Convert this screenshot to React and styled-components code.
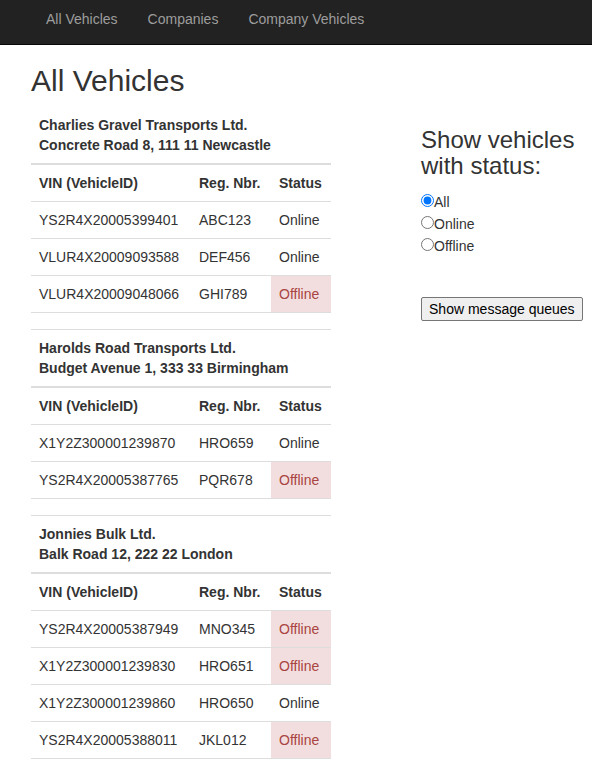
import React, { useState } from 'react';
import styled, { createGlobalStyle } from 'styled-components';

const companies = [
  {
    name: 'Charlies Gravel Transports Ltd.',
    address: 'Concrete Road 8, 111 11 Newcastle',
    vehicles: [
      { vin: 'YS2R4X20005399401', reg: 'ABC123', online: true },
      { vin: 'VLUR4X20009093588', reg: 'DEF456', online: true },
      { vin: 'VLUR4X20009048066', reg: 'GHI789', online: false },
    ],
  },
  {
    name: 'Harolds Road Transports Ltd.',
    address: 'Budget Avenue 1, 333 33 Birmingham',
    vehicles: [
      { vin: 'X1Y2Z300001239870', reg: 'HRO659', online: true },
      { vin: 'YS2R4X20005387765', reg: 'PQR678', online: false },
    ],
  },
  {
    name: 'Jonnies Bulk Ltd.',
    address: 'Balk Road 12, 222 22 London',
    vehicles: [
      { vin: 'YS2R4X20005387949', reg: 'MNO345', online: false },
      { vin: 'X1Y2Z300001239830', reg: 'HRO651', online: false },
      { vin: 'X1Y2Z300001239860', reg: 'HRO650', online: true },
      { vin: 'YS2R4X20005388011', reg: 'JKL012', online: false },
    ],
  },
];

const statuses = ['All', 'Online', 'Offline'];

const App = () => {
  const [status, setStatus] = useState('All');

  const visible = (v) =>
    status === 'All' || (status === 'Online' ? v.online : !v.online);

  return (
    <>
      <GlobalStyle />
      <Navbar>
        <NavList>
          <NavItem href="#">All Vehicles</NavItem>
          <NavItem href="#">Companies</NavItem>
          <NavItem href="#">Company Vehicles</NavItem>
        </NavList>
      </Navbar>

      <Container>
        <Title>All Vehicles</Title>
        <Row>
          <Table>
            <colgroup>
              <Col $w={160} />
              <Col $w={80} />
              <Col $w={60} />
            </colgroup>
            {companies.map((c, i) => {
              const last = i === companies.length - 1;
              return (
                <tbody key={c.name}>
                  <tr>
                    <CompanyCell colSpan={3} $first={i === 0}>
                      {c.name}
                      <br />
                      {c.address}
                    </CompanyCell>
                  </tr>
                  <tr>
                    <HeadCell>VIN (VehicleID)</HeadCell>
                    <HeadCell>Reg. Nbr.</HeadCell>
                    <HeadCell>Status</HeadCell>
                  </tr>
                  {c.vehicles.filter(visible).map((v) => (
                    <tr key={v.vin}>
                      <Cell>{v.vin}</Cell>
                      <Cell>{v.reg}</Cell>
                      <StatusCell $offline={!v.online}>
                        {v.online ? 'Online' : 'Offline'}
                      </StatusCell>
                    </tr>
                  ))}
                  {!last && (
                    <tr>
                      <SpacerCell colSpan={3} />
                    </tr>
                  )}
                </tbody>
              );
            })}
          </Table>

          <Sidebar>
            <SideTitle>Show vehicles with status:</SideTitle>
            {statuses.map((s) => (
              <RadioLabel key={s}>
                <Radio
                  type="radio"
                  name="status"
                  checked={status === s}
                  onChange={() => setStatus(s)}
                />
                {s}
              </RadioLabel>
            ))}
            <QueueButton type="button">Show message queues</QueueButton>
          </Sidebar>
        </Row>
      </Container>
    </>
  );
};

const GlobalStyle = createGlobalStyle`
  body {
    margin: 0;
    font-family: "Liberation Sans", Arial, Helvetica, sans-serif;
    font-size: 14px;
    line-height: 20px;
    color: #333;
    background: #fff;
  }
`;

const Navbar = styled.nav`
  height: 44px;
  background: #222;
  border-bottom: 1px solid #080808;
`;

const NavList = styled.div`
  display: flex;
  padding-left: 31px;
`;

const NavItem = styled.a`
  padding: 9px 15px 15px;
  line-height: 20px;
  color: #9d9d9d;
  text-decoration: none;

  &:hover {
    color: #fff;
  }
`;

const Container = styled.div`
  padding: 0 31px;
`;

const Title = styled.h2`
  margin: 19px 0 10px;
  font-size: 30px;
  line-height: 1.1;
  font-weight: 500;
`;

const Row = styled.div`
  display: flex;
  align-items: flex-start;
`;

const Table = styled.table`
  width: 300px;
  table-layout: fixed;
  border-collapse: collapse;
  border-bottom: 1px solid #ddd;
`;

const Col = styled.col`
  width: ${({ $w }) => $w}px;
`;

const CompanyCell = styled.th`
  padding: 8px;
  text-align: left;
  font-weight: bold;
  border-top: ${({ $first }) => ($first ? '0' : '1px solid #ddd')};
  border-bottom: 2px solid #ddd;
`;

const HeadCell = styled.th`
  padding: 8px;
  text-align: left;
  font-weight: bold;
  white-space: nowrap;
  border-top: 1px solid #ddd;
`;

const Cell = styled.td`
  padding: 8px;
  white-space: nowrap;
  border-top: 1px solid #ddd;
`;

const StatusCell = styled(Cell)`
  background: ${({ $offline }) => ($offline ? '#f2dede' : 'transparent')};
  color: ${({ $offline }) => ($offline ? '#a94442' : '#333')};
`;

const SpacerCell = styled.td`
  padding: 8px;
  border-top: 1px solid #ddd;
`;

const Sidebar = styled.div`
  width: 160px;
  margin-left: 90px;
`;

const SideTitle = styled.h3`
  margin: 20px 0 10px;
  font-size: 24px;
  line-height: 1.1;
  font-weight: 500;
`;

const RadioLabel = styled.label`
  display: block;
`;

const Radio = styled.input`
  margin: 4px 0 0;
  line-height: normal;
`;

const QueueButton = styled.button`
  margin-top: 41px;
  padding: 1px 7px;
  font-family: inherit;
  font-size: 14px;
  line-height: 20px;
  color: #000;
  background: #efefef;
  border: 1px solid #767676;
  border-radius: 2px;
  white-space: nowrap;
`;

export default App;
